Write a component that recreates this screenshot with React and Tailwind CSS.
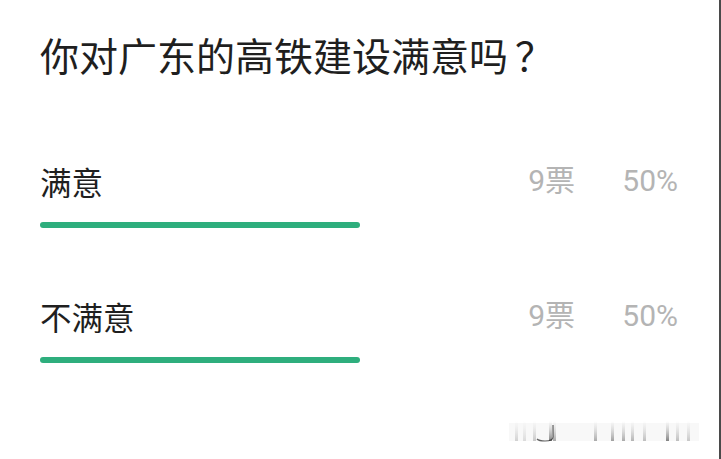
import React from 'react';

const options = [
    { label: '满意', votes: 9, percent: 50 },
    { label: '不满意', votes: 9, percent: 50 },
];

// faint smeared watermark in the bottom-right corner
const stripes = [
    { x: 6, o: 0.2 }, { x: 14, o: 0.15 }, { x: 24, o: 0.25 }, { x: 40, o: 0.6 }, { x: 44, o: 0.4 },
    { x: 85, o: 0.4 }, { x: 102, o: 0.45 }, { x: 113, o: 0.4 }, { x: 122, o: 0.35 },
    { x: 134, o: 0.3 }, { x: 157, o: 0.6 }, { x: 167, o: 0.3 }, { x: 178, o: 0.25 },
];

const Watermark = () => (
    <svg width="200" height="30" viewBox="0 0 200 30" className="absolute right-[10px] bottom-[12px]">
        <defs>
            <linearGradient id="fade" x1="0" y1="0" x2="0" y2="1">
                <stop offset="0" stopColor="#999" stopOpacity="0" />
                <stop offset="1" stopColor="#333" stopOpacity="1" />
            </linearGradient>
        </defs>
        <rect x="0" y="6" width="190" height="18" fill="#f4f4f4" opacity="0.6" />
        {stripes.map((s) => (
            <rect key={s.x} x={s.x} y="4" width="3" height="20" fill="url(#fade)" opacity={s.o} />
        ))}
        <path d="M44 8 V20 Q44 24 36 24 Q30 24 28 22" fill="none" stroke="#222" strokeWidth="1.2" opacity="0.7" />
    </svg>
);

const PollOption = ({ option }) => {
    return (
        <div className="flex flex-col">
            <div className="flex items-center h-[40px]">
                <span className="flex-1 text-[31.5px] leading-[40px] text-[#1f1f1f]" style={{ fontFamily: '"Noto Sans CJK SC", sans-serif' }}>
                    {option.label}
                </span>
                <span className="text-[30px] leading-[40px] text-[#b4b4b4]">{option.votes}票</span>
                <span className="w-[57px] ml-[46px] text-[30px] leading-[40px] text-[#b4b4b4] text-right">
                    {option.percent}%
                </span>
            </div>
            {/* progress bar */}
            <div className="mt-[21px] w-[320px] h-[6px] rounded-full bg-[#2eae7d]" />
        </div>
    );
};

const App = () => {
    return (
        <div
            className="relative w-[721px] h-[459px] bg-white border-r-2 border-[#4a4a4a] overflow-hidden"
            style={{ fontFamily: 'Roboto, "Noto Sans CJK SC", sans-serif' }}
        >
            <div className="pl-[40px] pr-[41px] pt-[32px]">
                <h1
                    className="text-[39px] leading-[44px] font-normal text-[#1f1f1f]"
                    style={{ fontFamily: '"Noto Sans CJK SC", sans-serif' }}
                >
                    你对广东的高铁建设满意吗<span className="ml-[7px]">？</span>
                </h1>

                <div className="mt-[85px] flex flex-col gap-[68px]">
                    {options.map((option) => (
                        <PollOption key={option.label} option={option} />
                    ))}
                </div>
            </div>

            <Watermark />
        </div>
    );
};

export default App;
